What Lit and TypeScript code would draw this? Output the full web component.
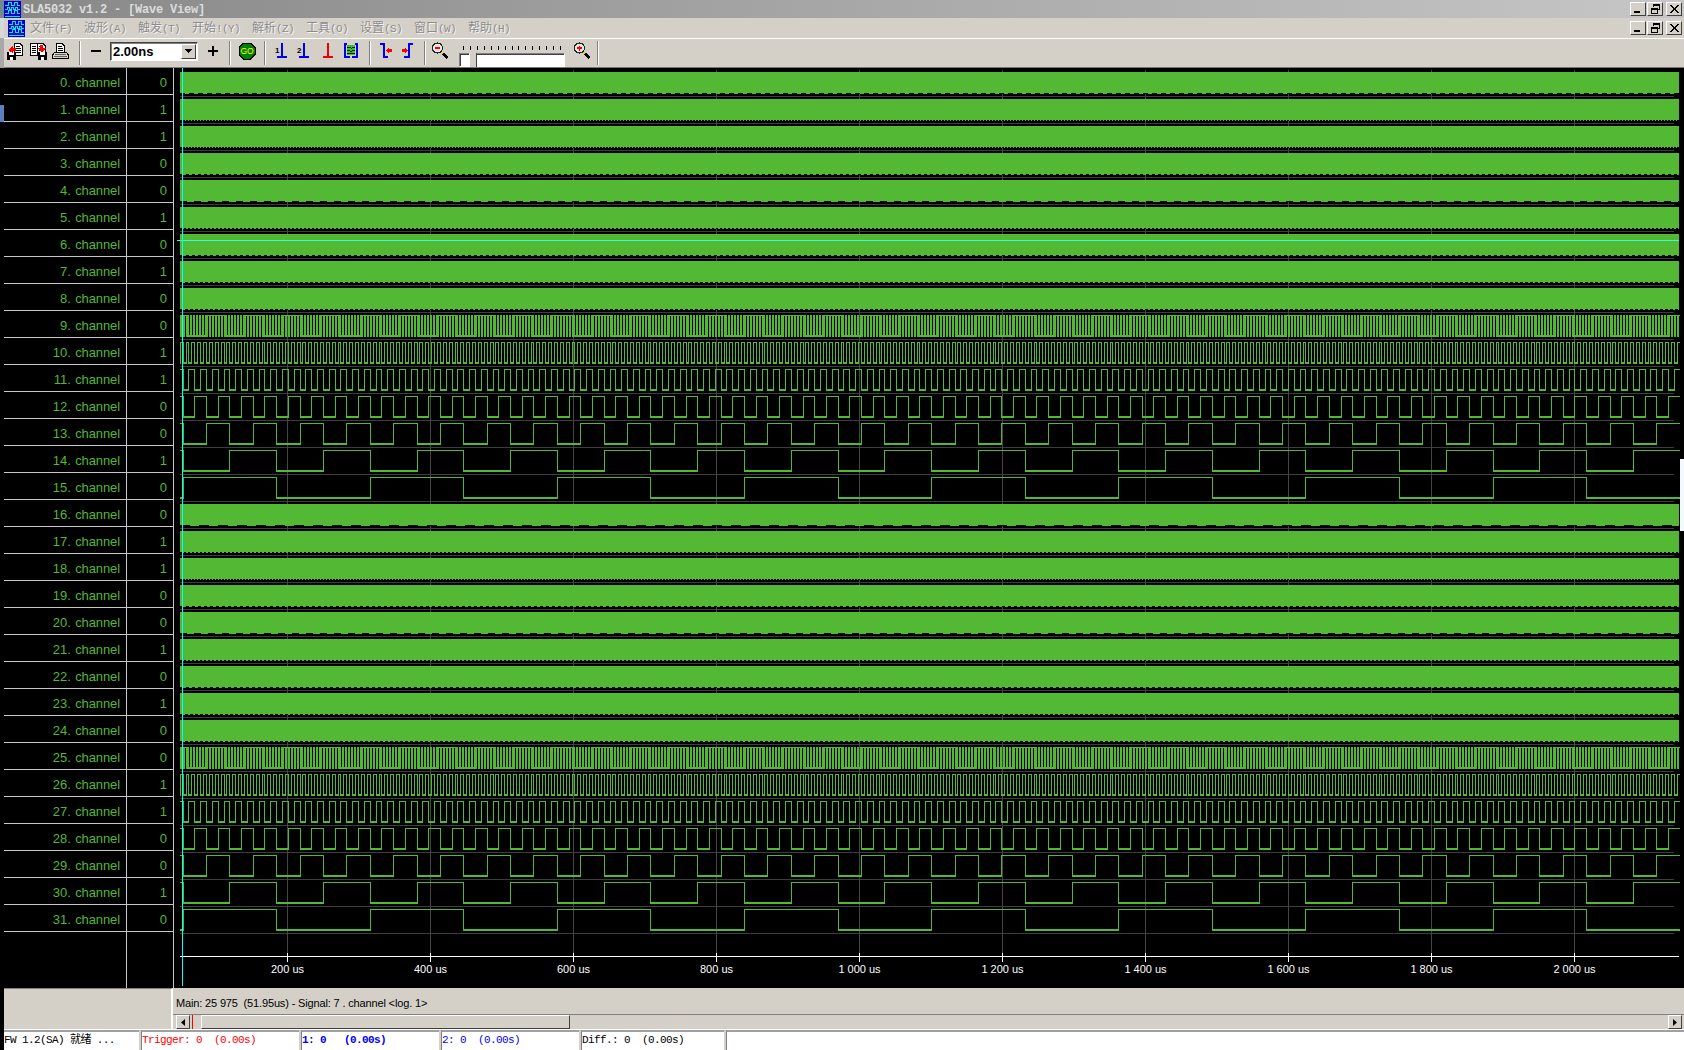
import { LitElement, html, css, svg } from 'lit';
import { customElement } from 'lit/decorators.js';

const ROW_H = 27;
const TOP = 68;
const WAVE_START = 180;
const WAVE_END = 1679;
const PHASE = 276.67;
const SLOWEST_HALF = 93.57;
const GREEN = '#53b834';

const VALUES = [0, 1, 1, 0, 0, 1, 0, 1, 0, 0, 1, 1, 0, 0, 1, 0, 0, 1, 1, 0, 0, 1, 0, 1, 0, 0, 1, 1, 0, 0, 1, 0];
// dash period along the bottom edge of the rows too fast to draw
const DASHES = [9, 3, 3, 6, 14, 4, 6, 5, 5, 19, 4, 3, 6, 14, 4, 6, 5, 5];

const AXIS = ['200 us', '400 us', '600 us', '800 us', '1 000 us', '1 200 us', '1 400 us', '1 600 us', '1 800 us', '2 000 us'];
const axisX = (i: number) => 287 + i * 143;

const MENUS = [
  ['文件', '(F)'], ['波形', '(A)'], ['触发', '(T)'], ['开始', '!(Y)'], ['解析', '(Z)'],
  ['工具', '(O)'], ['设置', '(S)'], ['窗口', '(W)'], ['帮助', '(H)'],
];

@customElement('wave-plot')
export class WavePlot extends LitElement {
  static styles = css`
    :host {
      display: block;
      flex: 1;
      background: #000;
    }

    svg {
      display: block;
      shape-rendering: crispEdges;
    }

    text {
      font: 11px "Liberation Sans", sans-serif;
      fill: #fff;
      text-anchor: middle;
    }
  `;

  // row period halves every channel: 15 is the slowest, 9 the fastest
  squareWave(top: number, half: number) {
    let highs = '';
    let lows = '';
    let edges = '';
    let n = Math.floor((WAVE_START - PHASE) / half);
    let from = WAVE_START;

    while (from < WAVE_END) {
      const to = Math.min(WAVE_END, PHASE + (n + 1) * half);
      const x0 = Math.floor(from);
      const x1 = Math.floor(to);
      const high = Math.abs(n % 2) === 1;

      if (high) {
        highs += `M${x0} ${top + 4.5}H${x1 + 1}`;
      } else {
        lows += `M${x0} ${top + 25}H${x1 + 1}`;
      }

      if (to < WAVE_END) {
        edges += `M${x1 + 0.5} ${top + 4}V${top + 26}`;
      }

      from = to;
      n += 1;
    }

    return svg`
      <path d=${highs} stroke=${GREEN} fill="none"></path>
      <path d=${lows} stroke=${GREEN} stroke-width="2" fill="none"></path>
      <path d=${edges} stroke=${GREEN} fill="none"></path>
    `;
  }

  solidTrace(top: number, dash: number) {
    return svg`
      <rect x=${WAVE_START} y=${top + 4} width=${WAVE_END - WAVE_START} height="22" fill=${GREEN}></rect>
      <line x1=${WAVE_START} x2=${WAVE_END} y1=${top + 25.5} y2=${top + 25.5} stroke="#000" stroke-dasharray="${dash / 2} ${dash / 2}"></line>
    `;
  }

  makeTrace(channel: number) {
    const top = TOP + channel * ROW_H;
    const bank = channel % 16;

    if (bank < 9) {
      return this.solidTrace(top, DASHES[channel < 16 ? bank : bank + 9]);
    }

    return this.squareWave(top, SLOWEST_HALF / Math.pow(2, 15 - bank));
  }

  render() {
    const rules = [];

    for (let i = 1; i <= 32; i++) {
      const y = TOP + i * ROW_H + 1;
      rules.push(svg`<line x1=${WAVE_START} x2="1674" y1=${y + 0.5} y2=${y + 0.5} stroke="#3e3e3e"></line>`);
    }

    return html`
      <svg width="1510" height="920" viewBox="174 68 1510 920">
        ${rules}
        ${AXIS.map((_, i) => svg`<line x1=${axisX(i) + 0.5} x2=${axisX(i) + 0.5} y1="70" y2="954" stroke="#444"></line>`)}
        ${VALUES.map((_, channel) => this.makeTrace(channel))}
        <line x1="177" x2=${WAVE_END} y1="240.5" y2="240.5" stroke="#33ffcc"></line>
        <line x1=${WAVE_START} x2=${WAVE_END} y1="956.5" y2="956.5" stroke="#fff"></line>
        ${AXIS.map((label, i) => svg`
          <line x1=${axisX(i) + 0.5} x2=${axisX(i) + 0.5} y1="953" y2="962" stroke="#fff"></line>
          <text x=${axisX(i) + 0.5} y="973">${label}</text>
        `)}
        <line x1="182.5" x2="182.5" y1="68" y2="986" stroke="#00ffff"></line>
      </svg>
    `;
  }
}

@customElement('app-root')
export class AppRoot extends LitElement {
  static styles = css`
    :host {
      display: block;
      position: relative;
      width: 1684px;
      height: 1050px;
      overflow: hidden;
      box-sizing: border-box;
      padding-left: 4px;
      background: linear-gradient(180deg, #6f8a90 0, #6f8a90 18px, #d8d8d8 18px, #d8d8d8 38px, #a8a8a8 38px, #a8a8a8 68px, #000 68px, #000 105px, #5a80c0 105px, #5a80c0 122px, #000 122px);
      font-family: "Liberation Sans", sans-serif;
    }

    .titlebar,
    .menubar {
      display: flex;
      align-items: center;
    }

    .titlebar {
      height: 18px;
      background: linear-gradient(90deg, #888, #c6c6c6);
    }

    .title {
      margin-left: 2px;
      padding-top: 1px;
      font: bold 12px "Liberation Mono", monospace;
      letter-spacing: -0.2px;
      color: #dcdcdc;
    }

    .win-buttons {
      display: flex;
      margin-left: auto;
      margin-right: 2px;
      gap: 1px;
    }

    .win-button {
      width: 16px;
      height: 14px;
      box-sizing: border-box;
      background: #d4d0c8;
      border: 1px solid;
      border-color: #fff #404040 #404040 #fff;
    }

    .win-button.close {
      margin-left: 2px;
    }

    .win-button svg {
      display: block;
      width: 14px;
      height: 12px;
    }

    .menubar {
      height: 20px;
      background: #d4d0c8;
      color: #8c8c8c;
      text-shadow: 1px 1px 0 #f4f4f4;
      font: 11px "Liberation Mono", monospace;
    }

    .menubar .logo {
      display: block;
      height: 17px;
      margin: 0 5px 0 4px;
    }

    .menu-item {
      width: 42px;
      margin-right: 12px;
      white-space: nowrap;
      letter-spacing: -0.6px;
      line-height: 16px;
      padding-bottom: 1px;
    }

    .menu-item.wide {
      width: 48px;
    }

    .cjk {
      font: 12px "Noto Sans CJK SC", sans-serif;
      letter-spacing: 0;
    }

    .toolbar {
      display: flex;
      align-items: center;
      height: 30px;
      box-sizing: border-box;
      background: #d4d0c8;
      border-top: 1px solid #fff;
      border-bottom: 1px solid #777;
    }

    .toolbar svg {
      display: block;
      flex: none;
      shape-rendering: crispEdges;
    }

    .sep {
      flex: none;
      width: 1px;
      height: 24px;
      background: #808080;
      border-right: 1px solid #fff;
    }

    .raise {
      margin-bottom: 4px;
    }

    .ml1 { margin-left: 1px; }
    .ml3 { margin-left: 3px; }
    .ml4 { margin-left: 4px; }
    .ml5 { margin-left: 5px; }
    .ml6 { margin-left: 6px; }
    .ml7 { margin-left: 7px; }
    .ml8 { margin-left: 8px; }
    .ml9 { margin-left: 9px; }
    .ml10 { margin-left: 10px; }

    .combo {
      display: flex;
      align-items: center;
      justify-content: space-between;
      flex: none;
      width: 88px;
      height: 19px;
      box-sizing: border-box;
      background: #fff;
      border: 1px solid;
      border-color: #404040 #fff #fff #404040;
      box-shadow: inset 1px 1px 0 #808080;
      padding-left: 2px;
      font: bold 13px "Liberation Sans", sans-serif;
      color: #000;
    }

    .combo-arrow {
      display: flex;
      align-items: center;
      justify-content: center;
      width: 15px;
      height: 15px;
      margin-right: 1px;
      box-sizing: border-box;
      background: #d4d0c8;
      border: 1px solid;
      border-color: #fff #404040 #404040 #fff;
    }

    .slider {
      position: relative;
      flex: none;
      width: 106px;
      height: 28px;
    }

    .slider-ticks {
      position: absolute;
      left: 4px;
      top: 6px;
    }

    .slider-box {
      position: absolute;
      left: 0;
      right: 0;
      top: 14px;
      height: 14px;
      box-sizing: border-box;
      background: #fff;
      border: 1px solid;
      border-color: #808080 #fff #fff #808080;
      box-shadow: inset 1px 1px 0 #404040;
    }

    .slider-thumb {
      position: absolute;
      left: 10px;
      top: 11px;
      width: 8px;
      height: 17px;
      box-sizing: border-box;
      background: #d4d0c8;
      border-left: 1px solid #fff;
      border-right: 1px solid #404040;
      clip-path: polygon(50% 0, 100% 20%, 100% 100%, 0 100%, 0 20%);
    }

    .main {
      display: flex;
      height: 920px;
      background: #000;
    }

    .names {
      display: flex;
      flex-direction: column;
      width: 170px;
      flex: none;
    }

    .row,
    .filler {
      display: grid;
      grid-template-columns: 123px 47px;
    }

    .row {
      height: 27px;
      box-sizing: border-box;
      border-bottom: 1px solid #c8c8c8;
      color: #53b834;
      font-size: 13px;
      line-height: 29px;
      text-align: right;
    }

    .filler {
      flex: 1;
    }

    .label,
    .value {
      box-sizing: border-box;
      border-right: 1px solid #c8c8c8;
    }

    .label {
      padding-right: 6px;
      letter-spacing: -0.1px;
      word-spacing: 1px;
    }

    .value {
      padding-right: 6px;
    }

    .info {
      display: grid;
      grid-template-columns: 169px 1fr;
      grid-template-rows: 26px 15px;
      height: 42px;
      background: #d4d0c8;
      border-bottom: 1px solid #fff;
      box-sizing: border-box;
    }

    .info-blank {
      grid-row: 1 / span 2;
      border-top: 1px solid #808080;
      border-right: 2px solid #fff;
    }

    .info-text {
      padding: 7px 0 0 3px;
      font-size: 11px;
      letter-spacing: -0.15px;
      line-height: 14px;
      color: #000;
      white-space: pre;
      border-top: 1px solid #d4d0c8;
    }

    .hscroll {
      display: flex;
      align-items: stretch;
      height: 15px;
      box-sizing: border-box;
      padding: 0 2px 0 3px;
      background: #d4d0c8;
      border-top: 1px solid #808080;
    }

    .scroll-btn {
      display: flex;
      align-items: center;
      justify-content: center;
      flex: none;
      width: 14px;
      box-sizing: border-box;
      border: 1px solid;
      border-color: #fff #404040 #404040 #fff;
    }

    .scroll-mark {
      flex: none;
      width: 1px;
      margin-left: 2px;
      background: #f00;
    }

    .scroll-thumb {
      flex: none;
      width: 369px;
      margin-left: 8px;
      box-sizing: border-box;
      border: 1px solid;
      border-color: #fff #404040 #404040 #fff;
    }

    .scroll-track {
      flex: 1;
    }

    .statusbar {
      display: flex;
      height: 20px;
      background: #fff;
      font: 11px "Liberation Mono", "Noto Sans CJK SC", monospace;
      letter-spacing: -0.6px;
      white-space: pre;
      line-height: 17px;
    }

    .status {
      flex: none;
      box-sizing: border-box;
      height: 20px;
      border-top: 2px solid #a0a0a0;
      border-left: 1px solid #808080;
    }

    .status + .status {
      box-shadow: -2px 0 0 #d4d0c8;
    }

    .status.first { width: 137px; border-left: none; color: #000; }
    .status.trigger { width: 160px; color: #f00; }
    .status.m1 { width: 140px; color: #00f; font-weight: bold; }
    .status.m2 { width: 140px; color: #00f; }
    .status.diff { width: 145px; color: #000; }
    .status.rest { flex: 1; }

    .peek {
      position: absolute;
      right: 0;
      top: 459px;
      width: 4px;
      height: 72px;
      background: #f4f8ff;
    }
  `;

  makeLogo() {
    return html`
      <svg width="17" height="17" viewBox="0 0 17 17" shape-rendering="crispEdges">
        <rect width="17" height="17" fill="#0000c8"></rect>
        <path d="M1 4.5h3v-3h3v3h3v-3h3v3h3M1 8.5h2v-2h2v2h2v-2h2v2h2v-2h2v2h3M1 12.5h3v-3h3v3h3v-3h3v3h3M1 15.5h15" fill="none" stroke="#00e8f0"></path>
      </svg>
    `;
  }

  makeWinButton(kind: string) {
    const glyphs: Record<string, unknown> = {
      min: svg`<rect x="3" y="8" width="6" height="2" fill="#000"></rect>`,
      restore: svg`<path d="M5.5 3.5V1.5H11.5V6.5H9.5M3.5 5.5H9.5V10.5H3.5Z M5 2.5H11 M3 6.5H9" fill="none" stroke="#000"></path>`,
      close: svg`<path d="M3 2L11 10M4 2L12 10M11 2L3 10M12 2L4 10" stroke="#000" fill="none"></path>`,
    };

    return html`
      <div class="win-button ${kind}">
        <svg viewBox="0 0 14 12" shape-rendering="crispEdges">${glyphs[kind]}</svg>
      </div>
    `;
  }

  makeWinButtons() {
    return html`
      <div class="win-buttons">
        ${this.makeWinButton('min')}
        ${this.makeWinButton('restore')}
        ${this.makeWinButton('close')}
      </div>
    `;
  }

  makeDisk(two: boolean) {
    const x = two ? 10 : 2;

    return svg`
      <path d="M9.5 0.5H15L17.5 3V12.5H9.5Z" fill="#fff" stroke="#000"></path>
      <path d="M11 3h4M11 5h5M11 7h5M11 9h5" stroke="#000"></path>
      ${two ? svg`<path d="M2.5 0.5H9.5V12.5H2.5Z" fill="#fff" stroke="#000"></path><path d="M4 3h4M4 5h4M4 7h4M4 9h4" stroke="#000"></path>` : ''}
      <rect x=${x} y="9" width="9" height="8" fill="#000"></rect>
      <rect x=${x + 2} y="9" width="5" height="3" fill="#fff"></rect>
      <rect x=${x + 3} y="14" width="3" height="3" fill="#fff"></rect>
      ${two
        ? svg`<path d="M12 2h3v3h3l-4 5l-4-5h2z" fill="#f00"></path>`
        : svg`<path d="M8 3v2h3v3H8v2L3 7l5-4z" fill="#f00"></path>`}
    `;
  }

  makeMarker(num: string, color: string) {
    return html`
      <svg width="18" height="20" viewBox="0 0 18 20">
        ${num ? svg`<text x="1" y="10" font-family="Liberation Sans" font-size="8" font-weight="bold" fill="#000">${num}</text>` : ''}
        <rect x="7" y="0" width="2" height="14" fill=${color}></rect>
        <rect x="3" y="13" width="10" height="2" fill=${color}></rect>
      </svg>
    `;
  }

  makeLens(mark: boolean) {
    return html`
      <svg width="18" height="18" viewBox="0 0 18 18" shape-rendering="geometricPrecision">
        <circle cx="6.5" cy="6" r="5" fill="#e8e8e8" stroke="#222" stroke-width="1.3"></circle>
        <path d="M4 6h5" stroke="#f00" stroke-width="1.2"></path>
        ${mark ? svg`<path d="M6.5 3.5v5" stroke="#f00" stroke-width="1.2"></path>` : ''}
        <path d="M10.5 10l1.5 1.5" stroke="#e8d800" stroke-width="2"></path>
        <path d="M12 11.5l4.5 4.5" stroke="#000" stroke-width="2.2"></path>
      </svg>
    `;
  }

  makeToolbar() {
    const ticks = Array.from({ length: 15 }, (_, i) => `M${Math.round(i * 6.93) + 0.5} 1v4`).join('');

    return html`
      <div class="toolbar">
        <svg class="ml1" width="20" height="20" viewBox="0 0 20 20">${this.makeDisk(false)}</svg>
        <svg class="ml3" width="20" height="20" viewBox="0 0 20 20">${this.makeDisk(true)}</svg>
        <svg class="ml3" width="20" height="20" viewBox="0 0 20 20">
          <path d="M5.5 0.5H11L13.5 3V9.5H5.5Z" fill="#fff" stroke="#000"></path>
          <path d="M7 3h4M7 5h5M7 7h5" stroke="#000"></path>
          <path d="M3.5 9.5H15.5L17.5 12V15.5H1.5V12Z" fill="#d4d0c8" stroke="#000"></path>
          <path d="M4 11h11M3 13h13" stroke="#666"></path>
          <rect x="15" y="13" width="1" height="1" fill="#f00"></rect>
        </svg>
        <div class="sep ml8"></div>
        <svg class="ml9 raise" width="12" height="12" viewBox="0 0 12 12"><rect x="1" y="5" width="10" height="2" fill="#000"></rect></svg>
        <div class="combo ml8 raise">
          <span>2.00ns</span>
          <span class="combo-arrow">
            <svg width="7" height="4" viewBox="0 0 7 4"><path d="M0 0h7L3.5 4z" fill="#000"></path></svg>
          </span>
        </div>
        <svg class="ml9 raise" width="12" height="12" viewBox="0 0 12 12"><path d="M1 5h4V1h2v4h4v2H7v4H5V7H1z" fill="#000"></path></svg>
        <div class="sep ml10"></div>
        <svg class="ml7 raise" width="18" height="18" viewBox="0 0 18 18" shape-rendering="geometricPrecision">
          <path d="M5.5 1H12.5L17 5.5V12.5L12.5 17H5.5L1 12.5V5.5Z" fill="#008000" stroke="#000"></path>
          <text x="9" y="12" text-anchor="middle" font-family="Liberation Sans" font-size="8.5" fill="#ffff00">GO</text>
        </svg>
        <div class="sep ml8"></div>
        <div class="ml8">${this.makeMarker('1', '#0000f0')}</div>
        <div class="ml4">${this.makeMarker('2', '#0000f0')}</div>
        <div class="ml6">${this.makeMarker('', '#f00000')}</div>
        <svg class="ml4" width="18" height="20" viewBox="0 0 18 20">
          <rect x="5" y="2" width="8" height="10" fill="#20d020"></rect>
          <path d="M5 4h3l1 1h1l1-1h2M5 7h2l1 1h2l1-1h2M5 10h8" stroke="#000" fill="none"></path>
          <path d="M3 0v14h5M15 0v14h-5M3 1h2M15 1h-2" fill="none" stroke="#0000f0" stroke-width="2"></path>
        </svg>
        <div class="sep ml9"></div>
        <svg class="ml6" width="18" height="20" viewBox="0 0 18 20">
          <path d="M3 1H7V14H11" fill="none" stroke="#0000f0" stroke-width="2"></path>
          <path d="M9 7.5L12 4.5V6H15V9H12V10.5Z" fill="#f00"></path>
        </svg>
        <svg class="ml4" width="18" height="20" viewBox="0 0 18 20">
          <path d="M14 1H10V14H5" fill="none" stroke="#0000f0" stroke-width="2"></path>
          <path d="M9 7.5L6 4.5V6H3V9H6V10.5Z" fill="#f00"></path>
        </svg>
        <div class="sep ml7"></div>
        <div class="ml5 raise">${this.makeLens(false)}</div>
        <div class="slider ml10">
          <svg class="slider-ticks" width="100" height="6" viewBox="0 0 100 6">
            <path d=${ticks} stroke="#000"></path>
          </svg>
          <div class="slider-box"></div>
          <div class="slider-thumb"></div>
        </div>
        <div class="ml8 raise">${this.makeLens(true)}</div>
        <div class="sep ml6"></div>
      </div>
    `;
  }

  render() {
    return html`
      <div class="titlebar">
        ${this.makeLogo()}
        <span class="title">SLA5032 v1.2 - [Wave View]</span>
        ${this.makeWinButtons()}
      </div>
      <div class="menubar">
        <span class="logo">${this.makeLogo()}</span>
        ${MENUS.map(([name, key]) => html`<span class="menu-item ${key.length > 3 ? 'wide' : ''}"><span class="cjk">${name}</span>${key}</span>`)}
        ${this.makeWinButtons()}
      </div>
      ${this.makeToolbar()}
      <div class="main">
        <div class="names">
          ${VALUES.map((value, i) => html`
            <div class="row">
              <span class="label">${i}. channel</span>
              <span class="value">${value}</span>
            </div>
          `)}
          <div class="filler">
            <span class="label"></span>
            <span class="value"></span>
          </div>
        </div>
        <wave-plot></wave-plot>
      </div>
      <div class="info">
        <div class="info-blank"></div>
        <div class="info-text">Main: 25 975  (51.95us) - Signal: 7 . channel &lt;log. 1&gt;</div>
        <div class="hscroll">
          <div class="scroll-btn"><svg width="4" height="7" viewBox="0 0 4 7"><path d="M4 0v7L0 3.5z" fill="#000"></path></svg></div>
          <div class="scroll-mark"></div>
          <div class="scroll-thumb"></div>
          <div class="scroll-track"></div>
          <div class="scroll-btn"><svg width="4" height="7" viewBox="0 0 4 7"><path d="M0 0v7L4 3.5z" fill="#000"></path></svg></div>
        </div>
      </div>
      <div class="statusbar">
        <div class="status first">FW 1.2(SA) 就绪 ...</div>
        <div class="status trigger">Trigger: 0  (0.00s)</div>
        <div class="status m1">1: 0   (0.00s)</div>
        <div class="status m2">2: 0  (0.00s)</div>
        <div class="status diff">Diff.: 0  (0.00s)</div>
        <div class="status rest"></div>
      </div>
      <div class="peek"></div>
    `;
  }
}
